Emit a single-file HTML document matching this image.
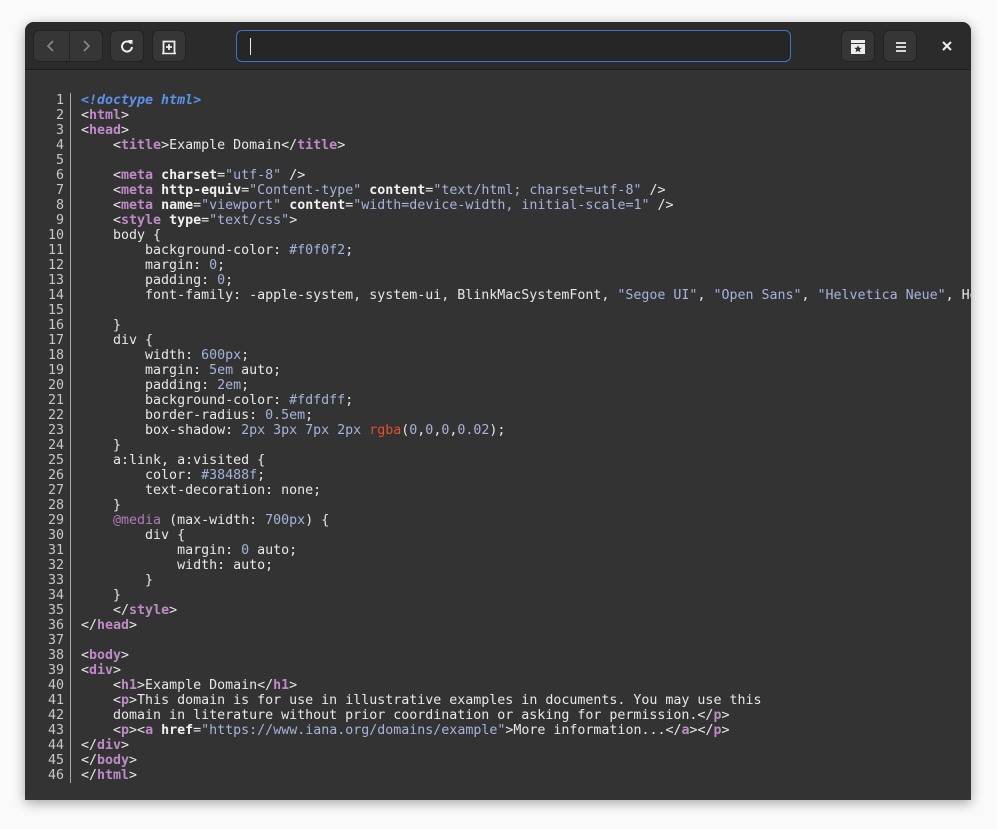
<!DOCTYPE html>
<html><head><style>
html,body{margin:0;padding:0;background:#fafafa;width:997px;height:829px;overflow:hidden}
.win{position:absolute;left:25px;top:22px;width:946px;height:778px;background:#2e2e2e;border-radius:9px 9px 0 0;box-shadow:0 3px 12px rgba(0,0,0,.35);overflow:hidden}
.hdr{position:absolute;left:0;top:0;width:946px;height:47px;background:#2b2b2b;border-bottom:1px solid #1b1b1b}
.btn{position:absolute;top:8px;height:32px;background:#363636;border-radius:6px;border:1px solid #222;box-sizing:border-box}
.url{position:absolute;left:211px;top:8px;width:555px;height:32px;box-sizing:border-box;border:1px solid #3b74c9;border-radius:6px;background:#262626}
.url:after{content:"";position:absolute;left:13px;top:7px;width:1px;height:17px;background:#eee}
.content{position:absolute;left:0;top:48px;width:946px;height:730px;background:#333333}
pre{margin:0;position:absolute;left:0;top:23px;font-family:"DejaVu Sans Mono","Liberation Mono",monospace;font-size:13.3px;line-height:15px;color:#e8e8e8;white-space:pre}
.ln{position:absolute;left:0;top:23px;width:39px;text-align:right;font-family:"DejaVu Sans Mono",monospace;font-size:13.3px;line-height:15px;color:#c8c8c8;white-space:pre}
.sep{position:absolute;left:45px;top:23px;width:1px;height:690px;background:#aaa}
.code{left:56px}
.t{color:#c08ac9;font-weight:bold}
.a{font-weight:bold;color:#f0f0f0}
.v{color:#a7b3dc}
.d{color:#5b92ea;font-style:italic;font-weight:bold}
.r{color:#e0502c}
.m{color:#b07bb9}
</style></head><body>
<div class="win">
<div class="hdr">
<div class="btn" style="left:8px;width:70px"><div style="position:absolute;left:35px;top:0;width:1px;height:30px;background:#252525"></div>
<svg style="position:absolute;left:10px;top:8px" width="14" height="14"><path d="M9 2 L4 7 L9 12" stroke="#8a8a8a" stroke-width="1.6" fill="none"/></svg>
<svg style="position:absolute;left:45px;top:8px" width="14" height="14"><path d="M5 2 L10 7 L5 12" stroke="#8a8a8a" stroke-width="1.6" fill="none"/></svg></div>
<div class="btn" style="left:85px;width:34px"><svg style="position:absolute;left:9px;top:8px" width="14" height="14"><path d="M11 4.5 A5 5 0 1 0 12 8" stroke="#eee" stroke-width="2" fill="none"/><path d="M8 1 L12.5 1 L12.5 5.5 Z" fill="#eee"/></svg></div>
<div class="btn" style="left:127px;width:34px"><svg style="position:absolute;left:8px;top:8px" width="16" height="16"><path d="M2.5 14 V2.5 H13.5 V14" stroke="#eee" stroke-width="1.8" fill="none"/><path d="M1 14.5 H15" stroke="#eee" stroke-width="1.6"/><path d="M8 5 V11 M5 8 H11" stroke="#eee" stroke-width="1.8"/></svg></div>
<div class="url"></div>
<div class="btn" style="left:816px;width:34px"><svg style="position:absolute;left:8px;top:8px" width="16" height="16"><rect x="1" y="1" width="14" height="3" fill="#eee"/><rect x="1" y="5" width="14" height="10" fill="#eee"/><path d="M8 6.2 L9.1 8.8 L11.8 8.9 L9.7 10.6 L10.4 13.3 L8 11.8 L5.6 13.3 L6.3 10.6 L4.2 8.9 L6.9 8.8 Z" fill="#2e2e2e"/></svg></div>
<div class="btn" style="left:858px;width:34px"><svg style="position:absolute;left:10px;top:9px" width="14" height="14"><path d="M2 3 H12 M2 7 H12 M2 11 H12" stroke="#eee" stroke-width="1.8"/></svg></div>
<svg style="position:absolute;left:917px;top:19px" width="10" height="10"><path d="M1 1 L9 9 M9 1 L1 9" stroke="#eee" stroke-width="2"/></svg>
</div>
<div class="content">
<div class="ln">1
2
3
4
5
6
7
8
9
10
11
12
13
14
15
16
17
18
19
20
21
22
23
24
25
26
27
28
29
30
31
32
33
34
35
36
37
38
39
40
41
42
43
44
45
46</div>
<div class="sep"></div>
<pre class="code"><span class="d">&lt;!doctype html&gt;</span>
&lt;<span class="t">html</span>&gt;
&lt;<span class="t">head</span>&gt;
    &lt;<span class="t">title</span>&gt;Example Domain&lt;/<span class="t">title</span>&gt;

    &lt;<span class="t">meta</span> <span class="a">charset</span>=<span class="v">"utf-8"</span> /&gt;
    &lt;<span class="t">meta</span> <span class="a">http-equiv</span>=<span class="v">"Content-type"</span> <span class="a">content</span>=<span class="v">"text/html; charset=utf-8"</span> /&gt;
    &lt;<span class="t">meta</span> <span class="a">name</span>=<span class="v">"viewport"</span> <span class="a">content</span>=<span class="v">"width=device-width, initial-scale=1"</span> /&gt;
    &lt;<span class="t">style</span> <span class="a">type</span>=<span class="v">"text/css"</span>&gt;
    body {
        background-color: <span class="v">#f0f0f2</span>;
        margin: <span class="v">0</span>;
        padding: <span class="v">0</span>;
        font-family: -apple-system, system-ui, BlinkMacSystemFont, <span class="v">"Segoe UI"</span>, <span class="v">"Open Sans"</span>, <span class="v">"Helvetica Neue"</span>, He

    }
    div {
        width: <span class="v">600px</span>;
        margin: <span class="v">5em</span> auto;
        padding: <span class="v">2em</span>;
        background-color: <span class="v">#fdfdff</span>;
        border-radius: <span class="v">0.5em</span>;
        box-shadow: <span class="v">2px 3px 7px 2px</span> <span class="r">rgba</span>(<span class="v">0</span>,<span class="v">0</span>,<span class="v">0</span>,<span class="v">0.02</span>);
    }
    a:link, a:visited {
        color: <span class="v">#38488f</span>;
        text-decoration: none;
    }
    <span class="m">@media</span> (max-width: <span class="v">700px</span>) {
        div {
            margin: <span class="v">0</span> auto;
            width: auto;
        }
    }
    &lt;/<span class="t">style</span>&gt;
&lt;/<span class="t">head</span>&gt;

&lt;<span class="t">body</span>&gt;
&lt;<span class="t">div</span>&gt;
    &lt;<span class="t">h1</span>&gt;Example Domain&lt;/<span class="t">h1</span>&gt;
    &lt;<span class="t">p</span>&gt;This domain is for use in illustrative examples in documents. You may use this
    domain in literature without prior coordination or asking for permission.&lt;/<span class="t">p</span>&gt;
    &lt;<span class="t">p</span>&gt;&lt;<span class="t">a</span> <span class="a">href</span>=<span class="v">"https://www.iana.org/domains/example"</span>&gt;More information...&lt;/<span class="t">a</span>&gt;&lt;/<span class="t">p</span>&gt;
&lt;/<span class="t">div</span>&gt;
&lt;/<span class="t">body</span>&gt;
&lt;/<span class="t">html</span>&gt;</pre>
</div>
</div>
</body></html>
